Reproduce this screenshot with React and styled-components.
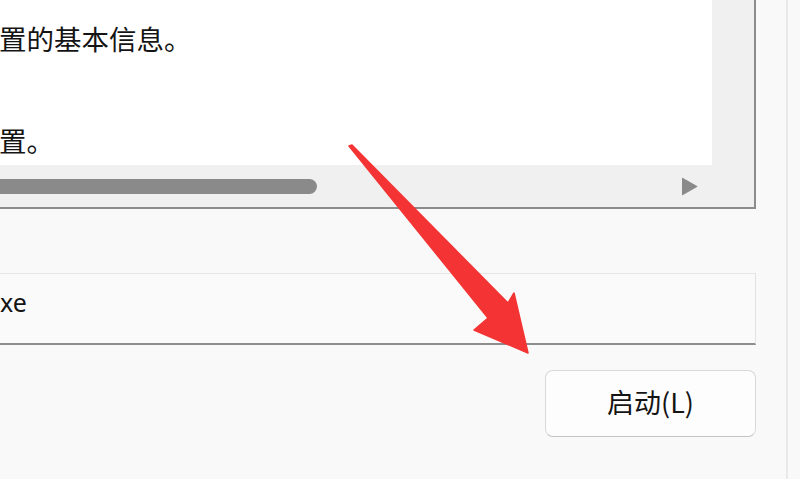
import React from "react";
import styled, { createGlobalStyle } from "styled-components";

const Global = createGlobalStyle`
  html, body { margin: 0; padding: 0; background: #f9f9f9; }
  body { width: 800px; height: 479px; overflow: hidden; }
`;

const Page = styled.div`
  position: relative;
  width: 800px;
  height: 479px;
  display: flex;
  flex-direction: row;
  background: #f9f9f9;
  font-family: "Noto Sans CJK SC", "Noto Sans", sans-serif;
  color: #141414;
`;

const Panel = styled.div`
  width: 756px;
  display: flex;
  flex-direction: column;
  align-items: stretch;
`;

const Edge = styled.div`
  margin-left: 30px;
  width: 2px;
  height: 100%;
  background: #e9e9e9;
`;

const ListBox = styled.div`
  height: 209px;
  display: grid;
  grid-template-columns: 712px 42px;
  grid-template-rows: 165px 42px;
  border-right: 2px solid #8c8c8c;
  border-bottom: 2px solid #8c8c8c;
  background: #f0f0f0;
  box-sizing: border-box;
`;

const Content = styled.div`
  background: #ffffff;
  padding-top: 13px;
  overflow: hidden;
`;

const Row = styled.div`
  height: 51px;
  line-height: 51px;
  font-size: 27.5px;
  white-space: nowrap;
  margin-left: -1px;
`;

const VScroll = styled.div`
  background: #f0f0f0;
`;

const HScroll = styled.div`
  display: flex;
  align-items: center;
  justify-content: space-between;
  background: #f0f0f0;
  padding-right: 14px;
`;

const Thumb = styled.div`
  width: 317px;
  height: 15px;
  border-radius: 0 8px 8px 0;
  background: #8a8a8a;
`;

const ArrowBtn = styled.svg`
  width: 17px;
  height: 19px;
  display: block;
`;

const Corner = styled.div`
  background: #f0f0f0;
`;

const Field = styled.div`
  margin-top: 64px;
  height: 72px;
  box-sizing: border-box;
  display: flex;
  align-items: center;
  background: #fafafa;
  border-top: 1px solid #e6e6e6;
  border-right: 1px solid #e3e3e3;
  border-bottom: 2px solid #8d8d8d;
  font-family: "Noto Sans", "Open Sans", sans-serif;
  font-size: 25px;
  color: #141414;
  padding-bottom: 14px;
`;

const Actions = styled.div`
  margin-top: 25px;
  display: flex;
  justify-content: flex-end;
`;

const Button = styled.button`
  width: 211px;
  height: 67px;
  border: 1px solid #d9d9d9;
  border-bottom-color: #c4c4c4;
  border-radius: 8px;
  background: #fdfdfd;
  font-family: "Noto Sans CJK SC", "Noto Sans", sans-serif;
  font-size: 27px;
  color: #141414;
  padding: 0 0 4px 0;
  cursor: default;
`;

const Annotation = styled.svg`
  position: absolute;
  left: 0;
  top: 0;
  width: 800px;
  height: 479px;
  pointer-events: none;
`;

export default function App() {
  return (
    <>
      <Global />
      <Page>
        <Panel>
          <ListBox>
            <Content>
              <Row>置的基本信息。</Row>
              <Row>&nbsp;</Row>
              <Row>置。</Row>
            </Content>
            <VScroll />
            <HScroll>
              <Thumb />
              <ArrowBtn viewBox="0 0 17 19">
                <path d="M1 1.5 Q1 0.5 2 1 L16 9 Q16.8 9.5 16 10 L2 18 Q1 18.5 1 17.5 Z" fill="#8a8a8a" />
              </ArrowBtn>
            </HScroll>
            <Corner />
          </ListBox>
          <Field>xe</Field>
          <Actions>
            <Button>启动(L)</Button>
          </Actions>
        </Panel>
        <Edge />
        <Annotation viewBox="0 0 800 479">
          <polygon
            points="349,146 488,318 474,330 528,353 514,293 508,303 352,145"
            fill="#f43434"
            stroke="#f43434"
            strokeWidth="1.5"
            strokeLinejoin="round"
          />
        </Annotation>
      </Page>
    </>
  );
}
